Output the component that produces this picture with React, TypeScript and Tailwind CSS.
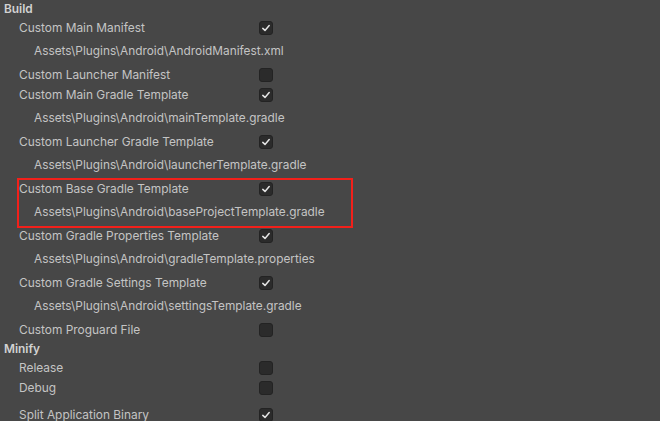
import React from 'react';

interface Setting {
  label: string;
  checked: boolean;
  path?: string;
  highlight?: boolean;
}

const buildSettings: Setting[] = [
  { label: 'Custom Main Manifest', checked: true, path: 'Assets\\Plugins\\Android\\AndroidManifest.xml' },
  { label: 'Custom Launcher Manifest', checked: false },
  { label: 'Custom Main Gradle Template', checked: true, path: 'Assets\\Plugins\\Android\\mainTemplate.gradle' },
  { label: 'Custom Launcher Gradle Template', checked: true, path: 'Assets\\Plugins\\Android\\launcherTemplate.gradle' },
  { label: 'Custom Base Gradle Template', checked: true, path: 'Assets\\Plugins\\Android\\baseProjectTemplate.gradle', highlight: true },
  { label: 'Custom Gradle Properties Template', checked: true, path: 'Assets\\Plugins\\Android\\gradleTemplate.properties' },
  { label: 'Custom Gradle Settings Template', checked: true, path: 'Assets\\Plugins\\Android\\settingsTemplate.gradle' },
  { label: 'Custom Proguard File', checked: false },
];

const Checkbox = ({ checked }: { checked: boolean }) => (
  <div className="w-[14px] h-[14px] rounded-[3px] bg-[#2b2b2b] border border-[#232323] flex items-center justify-center">
    {checked && (
      <svg width="10" height="10" viewBox="0 0 10 10">
        <path d="M1.8 5.4 L4 7.4 L8.2 2.6" fill="none" stroke="#e4e4e4" strokeWidth="1.5" strokeLinecap="round" strokeLinejoin="round" />
      </svg>
    )}
  </div>
);

const ToggleRow = ({ label, checked }: { label: string; checked: boolean }) => (
  <div className="flex items-center h-[20px]">
    <div className="w-[259px] pl-[19px]">{label}</div>
    <Checkbox checked={checked} />
  </div>
);

const SettingItem = ({ setting }: { setting: Setting }) => (
  <div className="relative">
    <ToggleRow label={setting.label} checked={setting.checked} />
    {setting.path && (
      <div className="flex items-center h-[27px] pl-[34px] text-[11.85px]">{setting.path}</div>
    )}
    {setting.highlight && (
      <div className="absolute left-[17px] top-[-1px] w-[336px] h-[50px] border-2 border-[#f2201a] pointer-events-none" />
    )}
  </div>
);

const App = () => {
  return (
    <div
      className="w-[660px] h-[421px] overflow-hidden bg-[#474747] text-[#c4c4c4] text-[11.9px] leading-none"
      style={{ fontFamily: 'Inter, "Noto Sans", sans-serif' }}
    >
      <div className="h-[18px] flex items-center pl-[4px] font-semibold text-[#d2d2d2]">Build</div>
      {buildSettings.map((s) => (
        <SettingItem key={s.label} setting={s} />
      ))}
      <div className="h-[18px] flex items-center pl-[4px] font-semibold text-[#d2d2d2]">Minify</div>
      <ToggleRow label="Release" checked={false} />
      <ToggleRow label="Debug" checked={false} />
      <div className="h-[7px]" />
      <ToggleRow label="Split Application Binary" checked={true} />
    </div>
  );
};

export default App;
